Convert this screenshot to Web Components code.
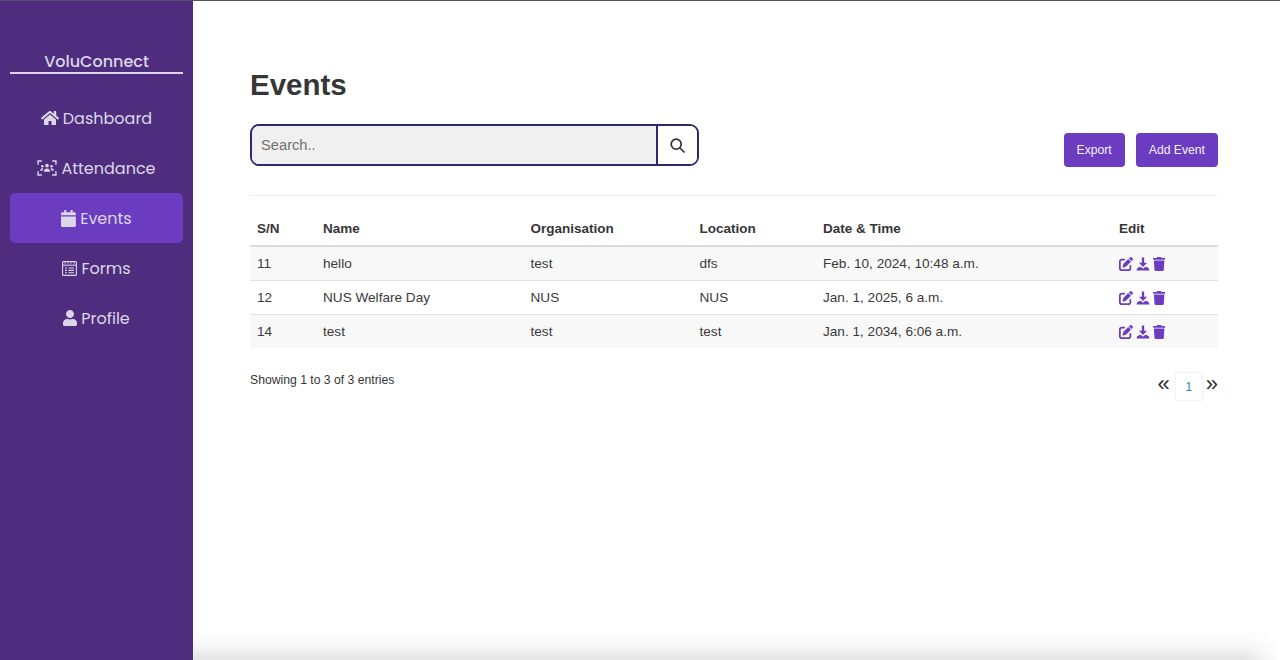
<!DOCTYPE html>
<html lang="en">
<head>
<meta charset="utf-8">
<title>Events</title>
<style>
  html, body { margin: 0; height: 100%; background: #fff; }
  body { overflow: hidden; }
</style>
</head>
<body>
<app-shell>
  <side-bar slot="side"></side-bar>
  <events-page slot="main"></events-page>
</app-shell>

<script>
const ICONS = {
  home: ['0 0 576 512', 'M280.37 148.26L96 300.11V464a16 16 0 0 0 16 16l112.06-.29a16 16 0 0 0 15.92-16V368a16 16 0 0 1 16-16h64a16 16 0 0 1 16 16v95.64a16 16 0 0 0 16 16.05L464 480a16 16 0 0 0 16-16V300L295.67 148.26a12.19 12.19 0 0 0-15.3 0zM571.6 251.47L488 182.56V44.05a12 12 0 0 0-12-12h-56a12 12 0 0 0-12 12v72.61L318.47 43a48 48 0 0 0-61 0L4.34 251.47a12 12 0 0 0-1.6 16.9l25.5 31A12 12 0 0 0 45.15 301l235.22-193.74a12.19 12.19 0 0 1 15.3 0L530.9 301a12 12 0 0 0 16.9-1.6l25.5-31a12 12 0 0 0-1.7-16.93z'],
  calendar: ['0 0 448 512', 'M12 192h424c6.6 0 12 5.4 12 12v260c0 26.5-21.5 48-48 48H48c-26.5 0-48-21.5-48-48V204c0-6.6 5.4-12 12-12zm436-44v-36c0-26.5-21.5-48-48-48h-48V12c0-6.6-5.4-12-12-12h-40c-6.6 0-12 5.4-12 12v52H160V12c0-6.6-5.4-12-12-12h-40c-6.6 0-12 5.4-12 12v52H48C21.5 64 0 85.5 0 112v36c0 6.6 5.4 12 12 12h424c6.6 0 12-5.4 12-12z'],
  user: ['0 0 448 512', 'M224 256c70.7 0 128-57.3 128-128S294.7 0 224 0 96 57.3 96 128s57.3 128 128 128zm89.6 32h-16.7c-22.2 10.2-46.9 16-72.9 16s-50.6-5.8-72.9-16h-16.7C60.2 288 0 348.2 0 422.4V464c0 26.5 21.5 48 48 48h352c26.5 0 48-21.5 48-48v-41.6c0-74.2-60.2-134.4-134.4-134.4z'],
  trash: ['0 0 448 512', 'M432 32H312l-9.4-18.7A24 24 0 0 0 281.1 0H166.8a23.72 23.72 0 0 0-21.4 13.3L136 32H16A16 16 0 0 0 0 48v32a16 16 0 0 0 16 16h416a16 16 0 0 0 16-16V48a16 16 0 0 0-16-16zM53.2 467a48 48 0 0 0 47.9 45h245.8a48 48 0 0 0 47.9-45L416 128H32z'],
  edit: ['0 0 512 512', 'M471.6 21.7c-21.9-21.9-57.3-21.9-79.2 0L362.3 51.7l97.9 97.9 30.1-30.1c21.9-21.9 21.9-57.3 0-79.2L471.6 21.7zm-299.2 220c-6.1 6.1-10.8 13.6-13.5 21.9l-29.6 88.8c-2.9 8.6-.6 18.1 5.8 24.6s15.9 8.7 24.6 5.8l88.8-29.6c8.2-2.7 15.7-7.4 21.9-13.5L437.7 172.3 339.7 74.3 172.4 241.7zM96 64C43 64 0 107 0 160V416c0 53 43 96 96 96H352c53 0 96-43 96-96V320c0-17.7-14.3-32-32-32s-32 14.3-32 32v96c0 17.7-14.3 32-32 32H96c-17.7 0-32-14.3-32-32V160c0-17.7 14.3-32 32-32h96c17.7 0 32-14.3 32-32s-14.3-32-32-32H96z'],
  download: ['0 0 24 24', 'M10 1h4v9h5l-7 7-7-7h5zM1 23c0-4 3-6 6-6h1.5l3.5 3 3.5-3H17c3 0 6 2 6 6z']
};

function svgIcon(name, h) {
  const [box, d] = ICONS[name];
  const [, , w, ht] = box.split(' ').map(Number);
  return `<svg xmlns="http://www.w3.org/2000/svg" viewBox="${box}" height="${h}" width="${(h * w / ht).toFixed(1)}" fill="currentColor"><path d="${d}"/></svg>`;
}

// attendance, forms and the search glass are outlined, drawn by hand
const ATTENDANCE = `<svg xmlns="http://www.w3.org/2000/svg" viewBox="0 0 21 17" width="20" height="16" fill="none" stroke="currentColor" stroke-width="1.5">
  <path d="M1 5V1h4M16 1h4v4M1 12v4h4M16 16h4v-4"/>
  <g fill="currentColor" stroke="none"><circle cx="10.5" cy="6" r="1.9"/><circle cx="5.6" cy="6.6" r="1.4"/><circle cx="15.4" cy="6.6" r="1.4"/>
  <path d="M7 12.5c0-2.2 1.6-3.6 3.5-3.6s3.5 1.4 3.5 3.6zM3.2 11.4c0-1.6 1-2.7 2.4-2.7.5 0 .9.1 1.2.3-.7.7-1 1.5-1.1 2.4zM17.8 11.4c0-1.6-1-2.7-2.4-2.7-.5 0-.9.1-1.2.3.7.7 1 1.5 1.1 2.4z"/></g></svg>`;
const FORMS = `<svg xmlns="http://www.w3.org/2000/svg" viewBox="0 0 15 15" width="15" height="15" fill="none" stroke="currentColor" stroke-width="1.1">
  <rect x=".6" y=".6" width="13.8" height="13.8" rx="1"/><path d="M.6 4.2h13.8"/><path d="M3 .6v2.2M6 .6v2.2M9 .6v2.2M12 .6v2.2" stroke-width=".8"/><path d="M3 7h2M6.5 7h5.5M3 9.4h2M6.5 9.4h5.5M3 11.8h2M6.5 11.8h5.5"/></svg>`;
const GLASS = `<svg xmlns="http://www.w3.org/2000/svg" viewBox="0 0 15 15" width="15" height="15" fill="none" stroke="currentColor" stroke-width="1.7" stroke-linecap="round"><circle cx="6.2" cy="6.2" r="5"/><path d="M10 10l4 4"/></svg>`;

class AppShell extends HTMLElement {
  constructor() {
    super();
    this.attachShadow({ mode: 'open' });
    this.shadowRoot.innerHTML = `
      <style>
        :host { display: flex; width: 1280px; height: 660px; overflow: hidden; position: relative; border-top: 1px solid #55506a; box-sizing: border-box; }
        .fade { position: absolute; left: 193px; right: 0; bottom: 0; height: 34px; pointer-events: none;
          background: linear-gradient(to top, #e2e2e2, #f1f1f1 28%, #fbfbfb 60%, rgba(255,255,255,0));
          -webkit-mask-image: linear-gradient(to left, transparent, #000 36px); mask-image: linear-gradient(to left, transparent, #000 36px); }
      </style>
      <slot name="side"></slot>
      <slot name="main"></slot>
      <div class="fade"></div>`;
  }
}

class SideBar extends HTMLElement {
  constructor() {
    super();
    this.attachShadow({ mode: 'open' });
    const items = [
      [svgIcon('home', 16), 'Dashboard', false],
      [ATTENDANCE, 'Attendance', false],
      [svgIcon('calendar', 17), 'Events', true],
      [FORMS, 'Forms', false],
      [svgIcon('user', 16), 'Profile', false]
    ];
    this.shadowRoot.innerHTML = `
      <style>
        :host { display: block; width: 193px; flex: none; box-sizing: border-box; padding: 51px 10px 0; background: #4e2d7e;
          color: #dcd6e8; font-family: Poppins, "Inter", "Noto Sans", sans-serif; }
        h1 { margin: 0 0 19px; font-size: 16px; line-height: 20px; font-weight: 500; text-align: center; border-bottom: 2px solid #dcd6e8; }
        a { display: flex; align-items: center; justify-content: center; gap: 4px; height: 50px; border-radius: 5px; font-size: 16px; font-weight: 400; }
        a.on { background: #6b3cc0; }
      </style>
      <h1>VoluConnect</h1>
      <nav>${items.map(([ic, t, on]) => `<a class="${on ? 'on' : ''}">${ic}<span>${t}</span></a>`).join('')}</nav>`;
  }
}

class EventRow extends HTMLElement {
  constructor() {
    super();
    this.attachShadow({ mode: 'open' });
    const c = ['sn', 'name', 'org', 'loc', 'date'].map(k => `<span>${this.getAttribute(k)}</span>`).join('');
    const ic = `<span class="ic">${svgIcon('edit', 14)}${svgIcon('download', 14)}${svgIcon('trash', 14)}</span>`;
    this.shadowRoot.innerHTML = `
      <style>
        :host { display: grid; grid-template-columns: 66px 207.5px 169px 123.5px 296px 1fr; align-items: center; height: 33px; padding-left: 7px;
          border-bottom: 1px solid #e2e2e2; font-size: 13.6px; color: #3a3a3a; }
        :host([odd]) { background: #f8f8f8; }
        :host(:last-of-type) { border-bottom: 0; }
        .ic { display: flex; gap: 3px; color: #6b3cc0; align-items: center; }
      </style>${c}${ic}`;
  }
}

class EventsPage extends HTMLElement {
  constructor() {
    super();
    this.attachShadow({ mode: 'open' });
    this.shadowRoot.innerHTML = `
      <style>
        :host { display: block; flex: 1; padding: 64px 62px 0 57px; font-family: "Liberation Sans", Arial, sans-serif; color: #363636; }
        h2 { margin: 0 0 20px; font-size: 29.5px; line-height: 39px; font-weight: 700; color: #363636; }
        .bar { display: flex; align-items: flex-start; justify-content: space-between; height: 71px; border-bottom: 1px solid #eeeeee; }
        .search { display: flex; width: 449px; height: 42px; box-sizing: border-box; border: 2px solid #2a2a6e; border-radius: 9px; overflow: hidden; }
        .search .in { flex: 1; background: #f0f0f0; font-size: 14.7px; color: #707070; display: flex; align-items: center; padding-left: 9px; }
        .search .btn { width: 41px; flex: none; box-sizing: border-box; border-left: 2px solid #2a2a6e; display: flex; align-items: center; justify-content: center; background: #fff; color: #303030; }
        .acts { display: flex; gap: 11px; margin-top: 9px; }
        .acts span { background: #6b3cc0; color: #f4f0fb; font-size: 12.2px; height: 34px; display: flex; align-items: center; padding: 0 13px; border-radius: 4px; }
        .head { display: grid; grid-template-columns: 66px 207.5px 169px 123.5px 296px 1fr; align-items: end; height: 51px; padding: 0 0 9px 7px; box-sizing: border-box; border-bottom: 2px solid #dcdcdc; font-size: 13.5px; font-weight: 700; }
        .foot { display: flex; justify-content: space-between; margin-top: 24px; font-size: 12.2px; }
        .foot > span { line-height: 16px; }
        .pg { display: flex; align-items: flex-start; margin-top: 1px; font-size: 22px; color: #303030; }
        .pg .arr { line-height: 22px; }
        .pg .n { width: 26px; height: 27px; margin: 0 4px 0 6px; display: flex; align-items: center; justify-content: center; font-size: 12px; color: #2f7fc1;
          background: #fff; box-shadow: 0 0 3px rgba(0,0,0,.12); }
      </style>
      <h2>Events</h2>
      <div class="bar">
        <div class="search"><div class="in">Search..</div><div class="btn">${GLASS}</div></div>
        <div class="acts"><span>Export</span><span>Add Event</span></div>
      </div>
      <div class="head"><span>S/N</span><span>Name</span><span>Organisation</span><span>Location</span><span>Date &amp; Time</span><span>Edit</span></div>
      <event-row odd sn="11" name="hello" org="test" loc="dfs" date="Feb. 10, 2024, 10:48 a.m."></event-row>
      <event-row sn="12" name="NUS Welfare Day" org="NUS" loc="NUS" date="Jan. 1, 2025, 6 a.m."></event-row>
      <event-row odd sn="14" name="test" org="test" loc="test" date="Jan. 1, 2034, 6:06 a.m."></event-row>
      <div class="foot"><span>Showing 1 to 3 of 3 entries</span>
        <div class="pg"><span class="arr">«</span><span class="n">1</span><span class="arr">»</span></div></div>`;
  }
}

customElements.define('event-row', EventRow);
customElements.define('side-bar', SideBar);
customElements.define('events-page', EventsPage);
customElements.define('app-shell', AppShell);
</script>
</body>
</html>
